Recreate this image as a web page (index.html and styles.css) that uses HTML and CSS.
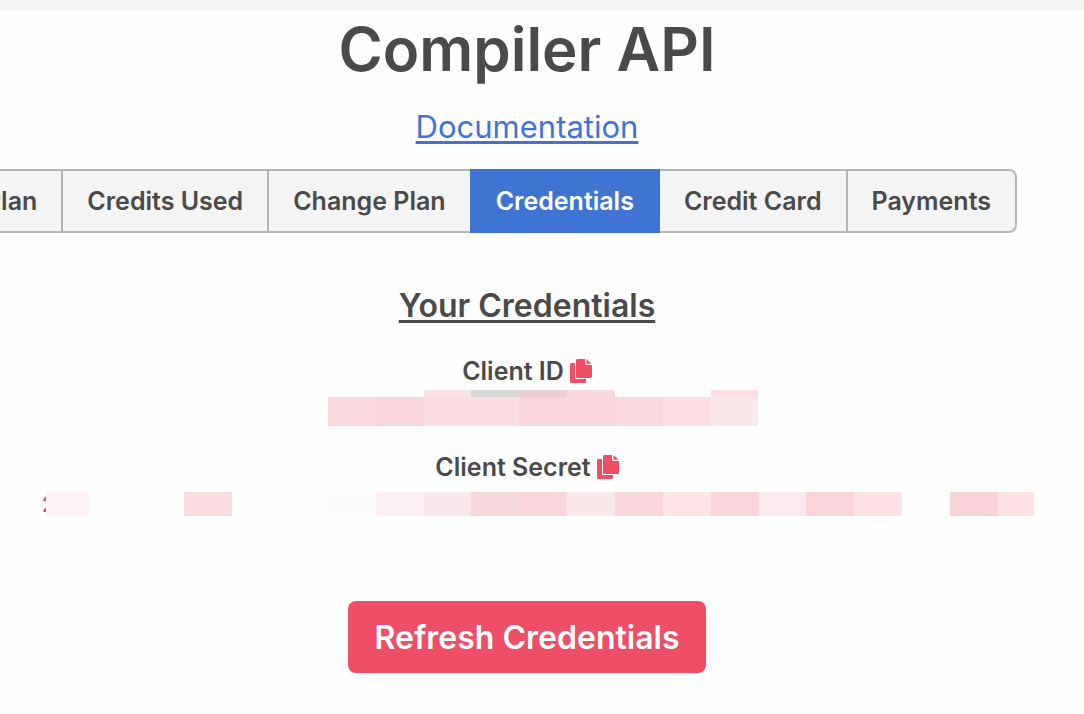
FILE: index.html
```html
<!DOCTYPE html>
<html lang="en">
<head>
<meta charset="utf-8">
<title>Compiler API</title>
<link rel="stylesheet" href="styles.css">
</head>
<body>
<div class="top-strip"></div>
<main class="page">
  <h1 class="title">Compiler API</h1>
  <a class="docs-link" href="#docs">Documentation</a>
  <nav class="tabs">
    <button class="tab" type="button">Current Plan</button>
    <button class="tab" type="button">Credits Used</button>
    <button class="tab" type="button">Change Plan</button>
    <button class="tab tab-active" type="button">Credentials</button>
    <button class="tab" type="button">Credit Card</button>
    <button class="tab" type="button">Payments</button>
  </nav>
  <h2 class="subtitle">Your Credentials</h2>
  <section class="credential">
    <div class="label">Client ID
      <button class="copy" type="button" aria-label="Copy client ID"><svg viewBox="0 0 22 24"><path d="M1.500 4H5v14.500A1.500 1.500 0 0 0 6.500 20H16v2.500a1.500 1.500 0 0 1-1.500 1.500h-13A1.500 1.500 0 0 1 0 22.500v-17A1.500 1.500 0 0 1 1.500 4zM7.500 0H15v4.500A1.500 1.500 0 0 0 16.500 6H22v11.500a1.500 1.500 0 0 1-1.500 1.500h-13A1.500 1.500 0 0 1 6 17.500v-16A1.500 1.500 0 0 1 7.500 0zM16.500 0L21.500 4.700H16.500z"/></svg></button>
    </div>
    <svg class="mask client-mask" width="430" height="36" viewBox="0 0 430 36" shape-rendering="crispEdges" aria-hidden="true">
      <rect x="96" width="47" height="7" fill="#f8e4e6"/><rect x="143" width="48" height="7" fill="#d6d6d6"/><rect x="191" width="48" height="7" fill="#ebcfd4"/><rect x="239" width="48" height="7" fill="#fbd8de"/><rect x="335" width="48" height="7" fill="#fefbfd"/><rect x="383" width="47" height="7" fill="#fddee3"/>
      <rect y="7" width="48" height="29" fill="#fadadf"/><rect x="48" y="7" width="48" height="29" fill="#fad7dc"/><rect x="96" y="7" width="95" height="29" fill="#fadde1"/><rect x="191" y="7" width="96" height="29" fill="#f9d6db"/><rect x="287" y="7" width="48" height="29" fill="#fad9de"/><rect x="335" y="7" width="48" height="29" fill="#fcdfe4"/><rect x="383" y="7" width="47" height="29" fill="#fbe8ea"/>
    </svg>
  </section>
  <section class="credential">
    <div class="label">Client Secret
      <button class="copy" type="button" aria-label="Copy client secret"><svg viewBox="0 0 22 24"><path d="M1.500 4H5v14.500A1.500 1.500 0 0 0 6.500 20H16v2.500a1.500 1.500 0 0 1-1.500 1.500h-13A1.500 1.500 0 0 1 0 22.500v-17A1.500 1.500 0 0 1 1.500 4zM7.500 0H15v4.500A1.500 1.500 0 0 0 16.500 6H22v11.500a1.500 1.500 0 0 1-1.500 1.500h-13A1.500 1.500 0 0 1 6 17.500v-16A1.500 1.500 0 0 1 7.500 0zM16.500 0L21.500 4.700H16.500z"/></svg></button>
    </div>
    <div class="secret"><span class="digit">2</span><svg class="mask" width="988" height="24" viewBox="46 0 988 24" shape-rendering="crispEdges" aria-hidden="true">
      <rect x="46" width="43" height="24" fill="#fef4f5"/><rect x="184" width="48" height="24" fill="#fadce1"/><rect x="328" width="48" height="24" fill="#fefbfc"/><rect x="376" width="48" height="24" fill="#fceff2"/><rect x="424" width="47" height="24" fill="#fae9ec"/><rect x="471" width="48" height="24" fill="#f6d9dd"/><rect x="519" width="48" height="24" fill="#fad6dc"/><rect x="567" width="48" height="24" fill="#fbe8ea"/><rect x="615" width="48" height="24" fill="#f9d7dc"/><rect x="663" width="48" height="24" fill="#fce4e7"/><rect x="711" width="48" height="24" fill="#fad5db"/><rect x="759" width="47" height="24" fill="#fae9ed"/><rect x="806" width="48" height="24" fill="#fad6dc"/><rect x="854" width="48" height="24" fill="#fce1e5"/><rect x="902" width="48" height="24" fill="#fefefe"/><rect x="950" width="48" height="24" fill="#fad3da"/><rect x="998" width="36" height="24" fill="#fce1e5"/>
    </svg></div>
  </section>
  <button class="refresh" type="button">Refresh Credentials</button>
</main>
</body>
</html>
```
FILE: styles.css
```css
* { box-sizing: border-box; }
body {
  margin: 0;
  background: #fefefe;
  color: #4a4a4a;
  font-family: Inter, "Liberation Sans", sans-serif;
  overflow-x: hidden;
}
button { font-family: inherit; cursor: pointer; }
.top-strip { height: 11px; background: #f4f4f4; }
.page {
  display: flex;
  flex-direction: column;
  align-items: center;
  padding: 0 30px 41px 0;
}
.title { margin: 0; font-size: 60px; line-height: 76px; font-weight: 600; }
.docs-link {
  margin-top: 16px;
  color: #3f74d3;
  font-size: 31px;
  line-height: 48px;
  text-decoration: underline;
  text-decoration-thickness: 3px;
  text-underline-offset: 3px;
  text-decoration-skip-ink: none;
}
.tabs {
  align-self: flex-end;
  display: flex;
  justify-content: flex-end;
  margin: 18px 37px 0 0;
}
.tab {
  flex: none;
  height: 64px;
  margin-left: -2px;
  padding: 0 24px;
  border: 2px solid #b5b5b5;
  background: #f4f4f4;
  color: #4a4a4a;
  font-size: 25px;
  font-weight: 600;
}
.tab:first-child { border-radius: 8px 0 0 8px; }
.tab:last-child { border-radius: 0 8px 8px 0; }
.tab-active {
  position: relative;
  border-color: #3f74d3;
  background: #3f74d3;
  color: #fff;
}
.subtitle {
  margin: 49px 0 0;
  font-size: 32px;
  line-height: 48px;
  font-weight: 600;
  text-decoration: underline;
  text-decoration-thickness: 3px;
  text-underline-offset: 3px;
}
.credential {
  display: flex;
  flex-direction: column;
  align-items: center;
  margin-top: 23px;
}
.label {
  display: flex;
  align-items: center;
  gap: 6px;
  height: 36px;
  font-size: 25px;
  font-weight: 600;
  white-space: nowrap;
}
.copy {
  display: flex;
  padding: 0;
  border: 0;
  background: none;
}
.copy svg { width: 22px; height: 24px; fill: #ee4e66; }
.mask { display: block; flex: none; }
.client-mask { margin: 1px 0 0 32px; }
.client-mask + * { margin-top: 0; }
.secret { display: flex; height: 24px; margin: 7px 0 0 22px; }
.digit {
  flex: none;
  width: 4px;
  overflow: hidden;
  color: #ee4e66;
  font-size: 22px;
  line-height: 24px;
  font-weight: 600;
}
.refresh {
  height: 72px;
  margin-top: 85px;
  padding: 0 27px;
  border: 0;
  border-radius: 8px;
  background: #ee4e66;
  color: #fff;
  font-size: 32px;
  font-weight: 600;
}
```
